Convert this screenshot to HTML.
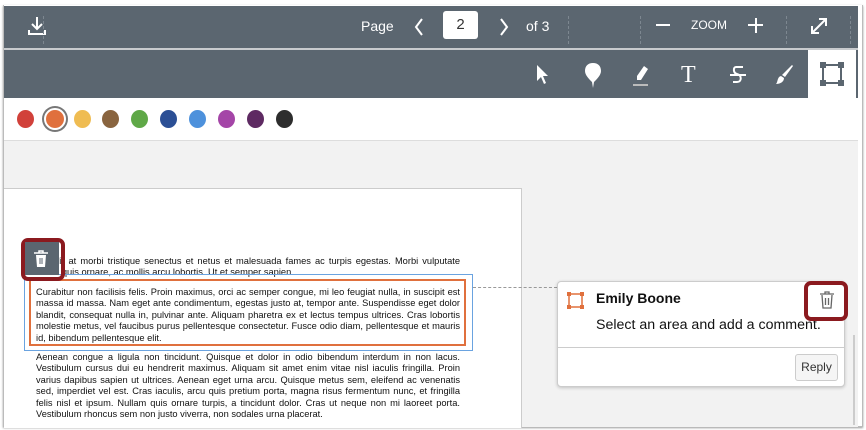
<!DOCTYPE html>
<html><head><meta charset="utf-8"><style>
*{margin:0;padding:0;box-sizing:border-box}
body{width:866px;height:430px;overflow:hidden;background:#fff;font-family:"Liberation Sans",Arial,sans-serif;position:relative}
.frame{position:absolute;left:3px;top:5px;width:860px;height:422px;border:1px solid #bbb;border-top:none;box-shadow:0 1px 2px #999}
.bar{position:absolute;left:4px;width:854px;background:#5b6670;color:#fff}
.sep{position:absolute;top:10px;height:28px;border-left:1px dashed #7d8790}
.t{position:absolute;font-size:14px;color:#fff}
.dot{position:absolute;top:110px;width:17px;height:18px;border-radius:50%}
.page{position:absolute;left:4px;top:188px;width:518px;height:240px;background:#fff;border-top:1px solid #ccc;border-right:1px solid #ccc;font-size:9.3px;line-height:11.4px;color:#111}
p{position:absolute;left:32px;width:424px;text-align:justify}
</style></head><body>
<div class="frame"></div>
<div class="bar" style="top:6px;height:42px">
 <svg style="position:absolute;left:22px;top:9px" width="22" height="22" viewBox="0 0 22 22" fill="none" stroke="#fff" stroke-width="2"><path d="M11 2v11M6 9l5 5 5-5M3 15v4h16v-4"/></svg>
 <div class="sep" style="left:39px"></div>
 <div class="t" style="left:357px;top:12px">Page</div>
 <svg style="position:absolute;left:409px;top:11px" width="12" height="20"><path d="M9 2L3 10l6 8" stroke="#fff" stroke-width="2" fill="none"/></svg>
 <div style="position:absolute;left:439px;top:5px;width:35px;height:28px;background:#fff;border-radius:3px;color:#333;font-size:15px;text-align:center;line-height:28px">2</div>
 <svg style="position:absolute;left:494px;top:11px" width="12" height="20"><path d="M3 2l6 8-6 8" stroke="#fff" stroke-width="2" fill="none"/></svg>
 <div class="t" style="left:522px;top:12px">of 3</div>
 <div class="sep" style="left:564px"></div>
 <div class="sep" style="left:636px"></div>
 <div style="position:absolute;left:652px;top:18px;width:14px;height:2px;background:#fff"></div>
 <div class="t" style="left:687px;top:12px;font-size:12px">ZOOM</div>
 <div style="position:absolute;left:744px;top:18px;width:15px;height:2px;background:#fff"></div>
 <div style="position:absolute;left:750.5px;top:12px;width:2px;height:15px;background:#fff"></div>
 <div class="sep" style="left:782px"></div>
 <svg style="position:absolute;left:804px;top:9px" width="22" height="22" fill="none" stroke="#fff" stroke-width="2"><path d="M4 18L18 4M11 4h7v7M4 11v7h7"/></svg>
 <div class="sep" style="left:846px"></div>
</div>
<div style="position:absolute;left:4px;top:48px;width:854px;height:2px;background:#c8cbce"></div>
<div class="bar" style="top:50px;height:48px">
 <svg style="position:absolute;left:531px;top:14px" width="14" height="22"><path d="M2 1v16l4-4 3 7 2-1-3-7h5z" fill="#fff"/></svg>
 <svg style="position:absolute;left:579px;top:12px" width="20" height="28"><path d="M10 1c5 0 8 3 8 8 0 4-4 8-7 11l-1 6-1-6C6 17 2 13 2 9c0-5 3-8 8-8z" fill="#fff"/></svg>
 <svg style="position:absolute;left:627px;top:14px" width="20" height="24"><path d="M13 2l4 3-7 11H6l0-4z" fill="#fff"/><path d="M2 21h15" stroke="#bbb" stroke-width="2"/></svg>
 <div class="t" style="left:677px;top:12px;font-size:24px;font-family:'Liberation Serif',serif">T</div>
 <svg style="position:absolute;left:725px;top:14px" width="18" height="22" fill="none" stroke="#fff" stroke-width="2"><path d="M14 3H7C4 3 4 9 8 10c5 1 5 8 0 8H4M1 11h16"/></svg>
 <svg style="position:absolute;left:770px;top:14px" width="20" height="22"><path d="M18 1l1 1-8 11-3-2zM7 12l3 2c0 4-4 6-8 6 2-2 1-7 5-8z" fill="#fff"/></svg>
 <div style="position:absolute;left:804px;top:0;width:48px;height:49px;background:#fff"></div>
 <svg style="position:absolute;left:816px;top:12px" width="24" height="24"><rect x="3" y="3" width="18" height="18" fill="none" stroke="#5b6670" stroke-width="2"/><g fill="#5b6670"><rect x="0" y="0" width="6" height="6"/><rect x="18" y="0" width="6" height="6"/><rect x="0" y="18" width="6" height="6"/><rect x="18" y="18" width="6" height="6"/></g></svg>
</div>
<div class="dot" style="left:17px;background:#d1413a"></div>
<div class="dot" style="left:44px;top:108px;width:22px;height:22px;background:#e0703d;border:2px solid #fff;box-shadow:0 0 0 2px #777"></div>
<div class="dot" style="left:74px;background:#efbc52"></div>
<div class="dot" style="left:102px;background:#89643f"></div>
<div class="dot" style="left:131px;background:#5fa847"></div>
<div class="dot" style="left:160px;background:#2b4f95"></div>
<div class="dot" style="left:189px;background:#4d91dc"></div>
<div class="dot" style="left:218px;background:#a445a7"></div>
<div class="dot" style="left:247px;background:#5e2a62"></div>
<div class="dot" style="left:276px;background:#2d2d2d"></div>
<div style="position:absolute;left:4px;top:140px;width:854px;height:287px;background:#f2f2f2;border-top:1px solid #ddd"></div>
<div style="position:absolute;left:853px;top:335px;width:2px;height:90px;background:#ccc"></div>
<div class="page">
 <p style="top:67px">Blandit at morbi tristique senectus et netus et malesuada fames ac turpis egestas. Morbi vulputate lorem quis ornare, ac mollis arcu lobortis. Ut et semper sapien.</p>
 <p style="top:98px">Curabitur non facilisis felis. Proin maximus, orci ac semper congue, mi leo feugiat nulla, in suscipit est massa id massa. Nam eget ante condimentum, egestas justo at, tempor ante. Suspendisse eget dolor blandit, consequat nulla in, pulvinar ante. Aliquam pharetra ex et lectus tempus ultrices. Cras lobortis molestie metus, vel faucibus purus pellentesque consectetur. Fusce odio diam, pellentesque et mauris id, bibendum pellentesque elit.</p>
 <p style="top:163px">Aenean congue a ligula non tincidunt. Quisque et dolor in odio bibendum interdum in non lacus. Vestibulum cursus dui eu hendrerit maximus. Aliquam sit amet enim vitae nisl iaculis fringilla. Proin varius dapibus sapien ut ultrices. Aenean eget urna arcu. Quisque metus sem, eleifend ac venenatis sed, imperdiet vel est. Cras iaculis, arcu quis pretium porta, magna risus fermentum nunc, et fringilla felis nisl et ipsum. Nullam quis ornare turpis, a tincidunt dolor. Cras ut neque non mi laoreet porta. Vestibulum rhoncus sem non justo viverra, non sodales urna placerat.</p>
</div>
<div style="position:absolute;left:24px;top:274px;width:449px;height:77px;border:1px solid #6aa3e0"></div>
<div style="position:absolute;left:29px;top:279px;width:437px;height:67px;border:2px solid #e0703d"></div>
<div style="position:absolute;left:473px;top:287px;width:84px;border-top:1px dashed #999"></div>
<div style="position:absolute;left:21px;top:238px;width:44px;height:43px;border:4px solid #8b1a1f;border-radius:7px"></div>
<div style="position:absolute;left:25px;top:242px;width:34px;height:33px;background:#5b6670"></div>
<svg style="position:absolute;left:33px;top:250px" width="16" height="18"><path d="M1 3h14M6 3V1h4v2" stroke="#fff" stroke-width="1.5" fill="none"/><path d="M3 5h10l-1 12H4z" fill="#fff"/><path d="M7 8v6M9 8v6" stroke="#5b6670"/></svg>
<div style="position:absolute;left:557px;top:281px;width:288px;height:106px;background:#fff;border:1px solid #ccc;border-radius:4px;box-shadow:0 1px 3px rgba(0,0,0,.2)"></div>
<svg style="position:absolute;left:567px;top:292px" width="17" height="17"><rect x="2" y="2" width="13" height="13" fill="none" stroke="#e0703d" stroke-width="1.5"/><g fill="#e0703d"><rect x="0" y="0" width="4" height="4"/><rect x="13" y="0" width="4" height="4"/><rect x="0" y="13" width="4" height="4"/><rect x="13" y="13" width="4" height="4"/></g></svg>
<div style="position:absolute;left:596px;top:290px;font-size:14px;font-weight:bold;color:#111">Emily Boone</div>
<div style="position:absolute;left:596px;top:317px;font-size:14.2px;color:#111">Select an area and add a comment.</div>
<div style="position:absolute;left:557px;top:347px;width:288px;border-top:1px solid #ccc"></div>
<div style="position:absolute;left:795px;top:354px;width:43px;height:27px;background:#f5f5f5;border:1px solid #ccc;border-radius:3px;font-size:12px;color:#333;text-align:center;line-height:25px">Reply</div>
<div style="position:absolute;left:804px;top:281px;width:44px;height:40px;border:4px solid #8b1a1f;border-radius:7px"></div>
<svg style="position:absolute;left:819px;top:291px" width="16" height="19" fill="none" stroke="#666" stroke-width="1.3"><path d="M1 3h14M6 3V1h4v2M3 4l1 13h8l1-13M6.5 7v7M9.5 7v7"/></svg>
</body></html>
